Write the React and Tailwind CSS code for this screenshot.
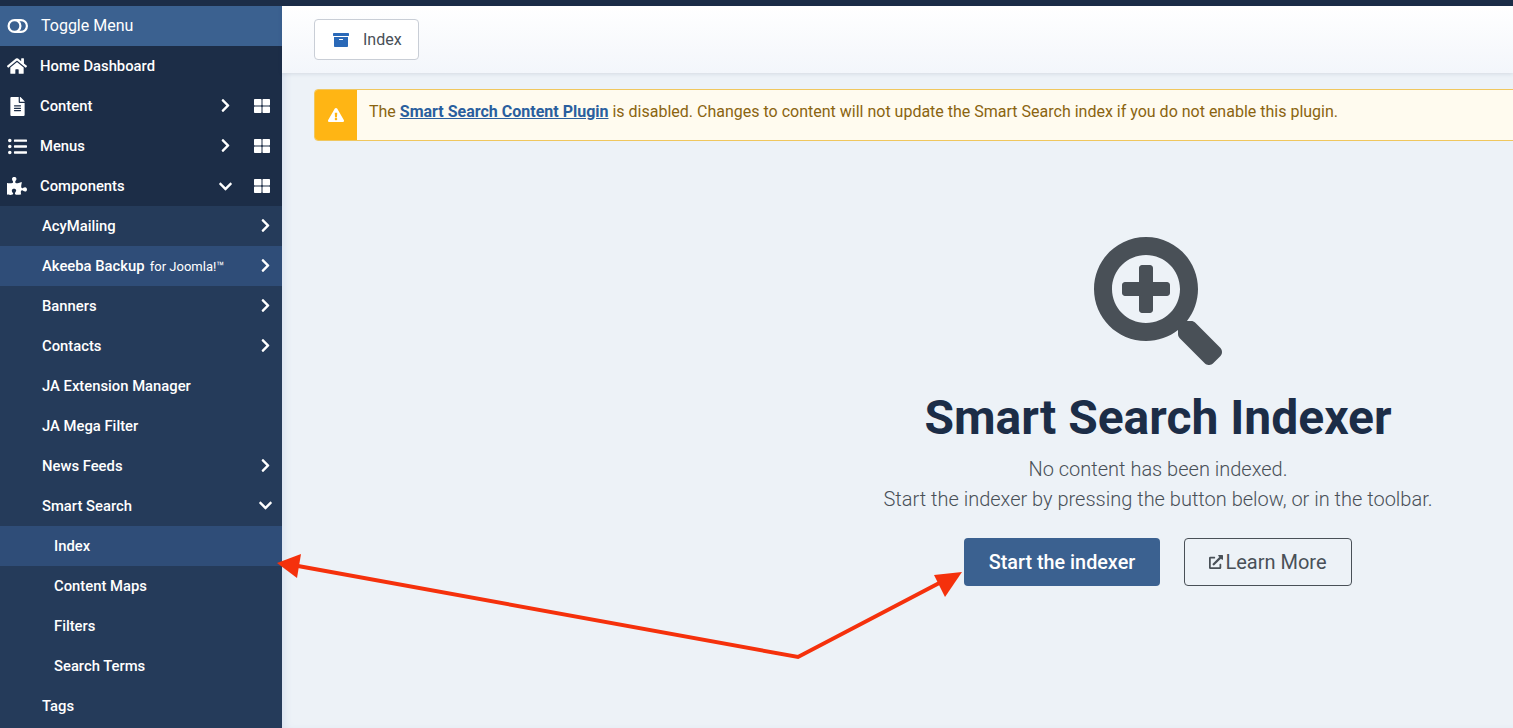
import {
  FaArchive,
  FaChevronDown,
  FaChevronRight,
  FaExclamationTriangle,
  FaExternalLinkAlt,
  FaFileAlt,
  FaHome,
  FaListUl,
  FaPuzzlePiece,
  FaSearchPlus,
  FaThLarge,
} from "react-icons/fa";

const topItems = [
  { label: "Home Dashboard", icon: FaHome, size: 20 },
  { label: "Content", icon: FaFileAlt, size: 19, more: "right", grid: true },
  { label: "Menus", icon: FaListUl, size: 19, more: "right", grid: true },
  { label: "Components", icon: FaPuzzlePiece, size: 20, more: "down", grid: true },
];

const subItems = [
  { label: "AcyMailing", more: "right" },
  { label: "Akeeba Backup", small: "for Joomla!™", more: "right", active: true },
  { label: "Banners", more: "right" },
  { label: "Contacts", more: "right" },
  { label: "JA Extension Manager" },
  { label: "JA Mega Filter" },
  { label: "News Feeds", more: "right" },
  { label: "Smart Search", more: "down" },
  { label: "Index", nested: true, active: true },
  { label: "Content Maps", nested: true },
  { label: "Filters", nested: true },
  { label: "Search Terms", nested: true },
  { label: "Tags" },
];

const ToggleIcon = () => (
  <svg width="22" height="14" viewBox="0 0 22 14" fill="none" stroke="white" strokeWidth="2.2">
    <path d="M8 1.1h6a5.9 5.9 0 0 1 0 11.8H8" />
    <circle cx="7.5" cy="7" r="5.9" fill="#3b6190" />
  </svg>
);

const Sidebar = () => (
  <aside className="w-[282px] shrink-0 bg-[#253b5a] text-[14.8px] font-medium text-white">
    <div className="flex h-10 items-center bg-[#3b6190] pl-[7px] text-base font-normal">
      <ToggleIcon />
      <span className="ml-3">Toggle Menu</span>
    </div>

    {topItems.map(({ label, icon: Icon, size, more, grid }) => (
      <div key={label} className="flex h-10 items-center bg-[#1c2d47]">
        <span className="flex w-10 justify-center pr-[6px]">
          <Icon size={size} />
        </span>
        <span className="flex-1 pt-px">{label}</span>
        {more === "right" && <FaChevronRight size={15} className="mb-px mr-[21px]" />}
        {more === "down" && <FaChevronDown size={15} className="mr-[21px]" />}
        {grid && <FaThLarge size={16} className="mr-[12px]" />}
      </div>
    ))}

    {subItems.map(({ label, small, more, nested, active }) => (
      <div
        key={label}
        className={`flex h-10 items-center pr-[9px] ${nested ? "pl-[54px]" : "pl-[42px]"} ${
          active ? "bg-[#2f4d78]" : ""
        }`}
      >
        <span className="flex-1 pt-px">
          {label}
          {small && <span className="ml-[2px] text-[13px] font-normal"> {small}</span>}
        </span>
        {more === "right" && <FaChevronRight size={15} className="mb-[2px]" />}
        {more === "down" && <FaChevronDown size={15} className="mb-[2px]" />}
      </div>
    ))}
  </aside>
);

const Arrows = () => (
  <svg
    className="pointer-events-none absolute left-0 top-0"
    width="1513"
    height="728"
    viewBox="0 0 1513 728"
  >
    <polyline points="298,566 798,657 945,580" fill="none" stroke="#f5310c" strokeWidth="4" />
    <polygon points="277,563 301,554 297,578" fill="#f5310c" />
    <polygon points="962,572 934,575 945,597" fill="#f5310c" />
  </svg>
);

const App = () => (
  <div className="relative h-[728px] w-[1513px] overflow-hidden bg-[#edf2f7] font-['Roboto',sans-serif]">
    <div className="h-[6px] bg-[#1c2d47]" />
    <div className="flex h-[722px]">
      <Sidebar />

      <main className="min-w-0 flex-1 shadow-[inset_6px_0_8px_-4px_rgba(120,150,210,0.2)]">
        <div className="flex h-[67px] items-center bg-gradient-to-b from-white to-[#f3f6fb] pl-8 shadow-[0_1px_4px_rgba(30,50,80,0.12)]">
          <button
            type="button"
            className="flex h-[41px] w-[105px] items-center rounded border border-[#c9ced6] bg-white pl-[18px] text-base text-[#495057]"
          >
            <FaArchive size={16} className="text-[#2a69b8]" />
            <span className="ml-[14px]">Index</span>
          </button>
        </div>

        <div className="ml-8 mt-4 flex h-[52px] w-[1300px] overflow-hidden rounded border border-[#f0c75e] bg-[#fffbef]">
          <div className="flex w-[42px] items-center justify-center bg-[#ffb514] text-white">
            <FaExclamationTriangle size={16} />
          </div>
          <p className="ml-3 mt-[10px] text-base text-[#8a6410]">
            The{" "}
            <a href="#" className="font-bold text-[#2a5f9e] underline">
              Smart Search Content Plugin
            </a>{" "}
            is disabled. Changes to content will not update the Smart Search index if you do not
            enable this plugin.
          </p>
        </div>

        <div className="ml-[576px] mt-[96px] flex w-[600px] flex-col items-center">
          <FaSearchPlus size={128} className="text-[#495057]" />
          <h1 className="mt-6 text-[48px] font-bold leading-[58px] text-[#1c2d47]">
            Smart Search Indexer
          </h1>
          <p className="mt-[7px] text-center text-xl font-light leading-[30px] text-[#495057]">
            No content has been indexed.
            <br />
            Start the indexer by pressing the button below, or in the toolbar.
          </p>
          <div className="mt-6 flex gap-6">
            <button
              type="button"
              className="h-12 w-[196px] rounded bg-[#3b6190] pt-px text-[19.8px] font-medium text-white"
            >
              Start the indexer
            </button>
            <button
              type="button"
              className="flex h-12 w-[168px] items-center justify-center gap-[2px] rounded border border-[#495057] text-xl text-[#495057]"
            >
              <FaExternalLinkAlt size={14} />
              Learn More
            </button>
          </div>
        </div>
      </main>
    </div>
    <Arrows />
  </div>
);

export default App;
